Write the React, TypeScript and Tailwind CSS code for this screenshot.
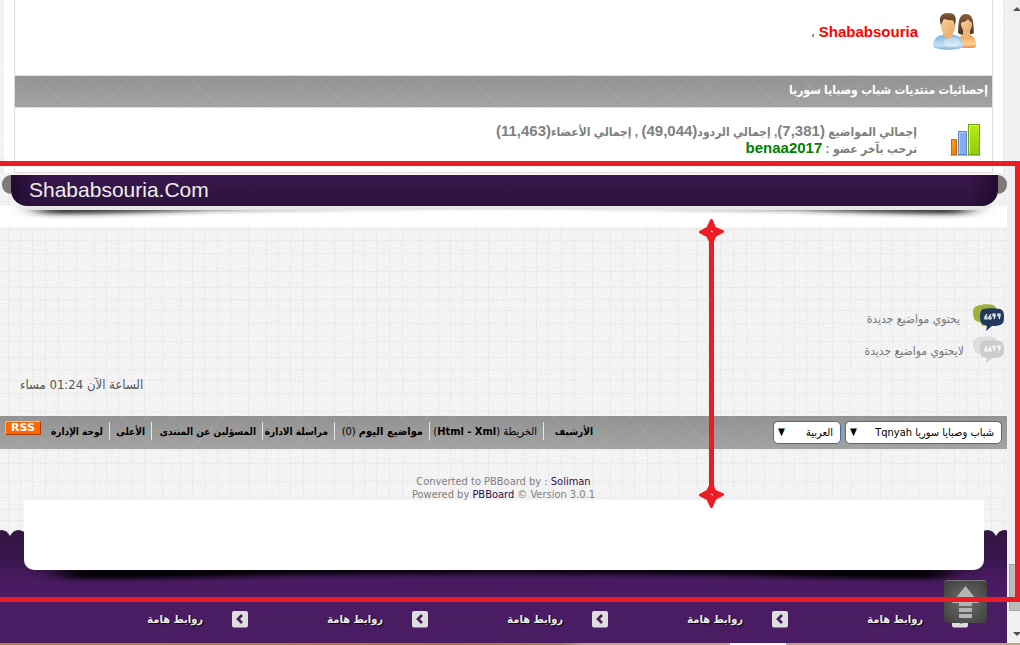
import React from 'react';

interface FooterLink {
  label: React.ReactNode;
  width: string;
}

const footerLinks: FooterLink[] = [
  { label: <b className="text-[10px]">الأرشيف</b>, width: 'w-[56px]' },
  { label: <>الخريطة (<b>Html - Xml</b>)</>, width: 'w-[114px]' },
  { label: <><b>مواضيع اليوم</b> (0)</>, width: 'w-[95px]' },
  { label: <b className="text-[10px]">مراسلة الادارة</b>, width: 'w-[72px]' },
  { label: <b className="text-[10px]">المسؤلين عن المنتدى</b>, width: 'w-[111px]' },
  { label: <b className="text-[10px]">الأعلى</b>, width: 'w-[42px]' },
  { label: <b className="text-[10px]">لوحة الإدارة</b>, width: 'w-[65px]' },
];

const hatch =
  'bg-[repeating-linear-gradient(45deg,#ffffff0d_0_1px,transparent_1px_18px),repeating-linear-gradient(-45deg,#ffffff0d_0_1px,transparent_1px_18px),linear-gradient(#929292,#a3a3a3)]';

const PaperTexture: React.FC = () => (
  <svg className="absolute inset-0 w-full h-full" aria-hidden="true">
    <defs>
      <filter id="grain" x="0" y="0" width="100%" height="100%">
        <feTurbulence type="fractalNoise" baseFrequency="0.6" numOctaves="2" seed="4" />
        <feColorMatrix values="0 0 0 0 0.84  0 0 0 0 0.84  0 0 0 0 0.84  2 0 0 0 -0.75" />
      </filter>
      <pattern id="weave" width="86" height="70" patternUnits="userSpaceOnUse">
        <path
          d="M8.5 0V70M20.5 0V70M32.5 0V70M45.5 0V70M58.5 0V70M76.5 0V70M0 7.5H86M0 19.5H86M0 30.5H86M0 43.5H86M0 61.5H86"
          stroke="#dedede"
          strokeWidth="1"
          opacity="0.4"
        />
      </pattern>
    </defs>
    <rect width="100%" height="100%" fill="#f6f6f6" />
    <rect width="100%" height="100%" filter="url(#grain)" />
    <rect width="100%" height="100%" fill="url(#weave)" />
  </svg>
);

const PeopleIcon: React.FC = () => (
  <svg width="44" height="38" viewBox="0 0 44 38" aria-hidden="true">
    <defs>
      <linearGradient id="blueShirt" x1="0" y1="0" x2="0" y2="1">
        <stop offset="0" stopColor="#7fb2dc" />
        <stop offset=".7" stopColor="#c5e2f6" />
        <stop offset="1" stopColor="#86b0d4" />
      </linearGradient>
      <linearGradient id="orangeShirt" x1="0" y1="0" x2="0" y2="1">
        <stop offset="0" stopColor="#f2a04c" />
        <stop offset=".7" stopColor="#ffd093" />
        <stop offset="1" stopColor="#ee8d35" />
      </linearGradient>
      <linearGradient id="skin" x1="0" y1="0" x2="1" y2="1">
        <stop offset="0" stopColor="#fbd4a1" />
        <stop offset="1" stopColor="#e6a668" />
      </linearGradient>
      <linearGradient id="hair" x1="0" y1="0" x2="0" y2="1">
        <stop offset="0" stopColor="#86603c" />
        <stop offset="1" stopColor="#4b2f1b" />
      </linearGradient>
    </defs>
    <path d="M26 35V25c1-2 3-3 5-3l6 0c4 1 6 5 6 11 0 1-1 2-3 2z" fill="url(#orangeShirt)" />
    <path d="M25 20C26 14 24 1 33 1c9 0 7 13 8 19-3 2-13 3-16 0z" fill="url(#hair)" />
    <path d="M30 17h7v5c-1 3-5 4-7 0z" fill="#eeb47a" />
    <path d="M28 10c2-1 6-2 7-4 1 2 3 3 4 4 0 6-2 9-5 9s-6-4-6-9z" fill="url(#skin)" />
    <path d="M0 33c0-6 3-10 9-11l12 0c7 1 9 5 9 11 0 5-29 5-30 0z" fill="url(#blueShirt)" />
    <ellipse cx="19" cy="29" rx="8" ry="5" fill="#fff" opacity=".35" />
    <path d="M10 19h10v3c-2 5-8 5-10 0z" fill="#eab077" />
    <path d="M8 9c0-6 14-6 14 0 1 8-2 13-7 13S7 17 8 9z" fill="url(#skin)" />
    <path d="M8 12C5 3 9 0 15 0c7 0 9 3 7 12l-2-5c-3 1-7-1-9-1-1 1-2 4-3 6z" fill="url(#hair)" />
  </svg>
);

const StatsIcon: React.FC = () => (
  <svg width="31" height="33" viewBox="0 0 31 33" aria-hidden="true">
    <defs>
      <linearGradient id="barOrange" x1="0" y1="0" x2="1" y2="1">
        <stop offset="0" stopColor="#ffa827" />
        <stop offset="1" stopColor="#ee7200" />
      </linearGradient>
      <linearGradient id="barGreen" x1="0" y1="0" x2="0" y2="1">
        <stop offset="0" stopColor="#b9ec18" />
        <stop offset="1" stopColor="#8fcb0c" />
      </linearGradient>
    </defs>
    <path d="M0 32.5H31" stroke="#b9b3b3" />
    <rect x="1.5" y="16.5" width="5" height="15" fill="url(#barOrange)" stroke="#c86a10" />
    <rect x="8.5" y="8.5" width="8" height="23" fill="#86aeee" stroke="#5c86cd" />
    <path d="M9.5 31V9.5h6" fill="none" stroke="#b4cff8" />
    <rect x="18.5" y="1.5" width="11" height="30" fill="url(#barGreen)" stroke="#72a60c" />
    <path d="M19.5 31V2.5h9" fill="none" stroke="#d5f56b" />
  </svg>
);

interface BubblesProps {
  back: string;
  front: string;
}

const Bubbles: React.FC<BubblesProps> = ({ back, front }) => (
  <svg width="32" height="27" viewBox="0 0 32 27" className="-mt-1" aria-hidden="true">
    <path d="M5 2C10 0 17 0 21 1c3 1 4 4 4 8l-2 8-11 2-1 4-3-5C3 18 1 14 1 9c0-4 1-6 4-7z" fill={back} />
    <path d="M11 5c5-1 12-1 17 0 3 1 4 3 4 8s-1 7-4 8c-2 1-6 1-8 1l-6 5 1-5c-5-1-7-4-7-9 0-5 1-7 3-8z" fill={front} />
    <path
      d="M15 10l-2 3h2v2h-2v-2M19 10l-2 3h2v2h-2v-2M21 10h2v2h-2zM23 10v2l-1 3M26 10h2v2h-2zM28 10v2l-1 3"
      fill="none"
      stroke="#fff"
      strokeWidth="1.2"
    />
  </svg>
);

const BannerShadow: React.FC = () => (
  <svg className="block w-full h-[21px]" viewBox="0 0 1007 21" preserveAspectRatio="none" aria-hidden="true">
    <defs>
      <filter id="soft" filterUnits="userSpaceOnUse" x="-20" y="-10" width="1047" height="50">
        <feGaussianBlur stdDeviation="12 2.5" />
      </filter>
    </defs>
    <rect width="1007" height="21" fill="#fff" />
    <path d="M35 1H972L965 8Q900 8 800 4 504 -2 207 4 107 8 42 8z" fill="#222" filter="url(#soft)" />
    <path d="M13 0H994Q984 4 968 4H39Q23 4 13 0z" fill="#e6e6e6" />
  </svg>
);

const StarMark: React.FC = () => (
  <svg width="25" height="26" viewBox="0 0 25 26" aria-hidden="true">
    <path
      d="M12.5 1.500L15.500 9 23.500 12.500 16 16.500 12.500 24.500 9 17 1.500 13 9 9z"
      fill="#ed1c24"
      stroke="#ed1c24"
      strokeWidth="3"
      strokeLinejoin="round"
    />
    <path d="M12 12l2 1" stroke="#fff" />
  </svg>
);

const App: React.FC = () => {
  return (
    <div className="relative flex overflow-hidden bg-[#f0f0f0] font-['DejaVu_Sans_Condensed','DejaVu_Sans',sans-serif] text-[11px]">
      <main dir="rtl" className="relative flex-1 min-w-0 bg-[#f4f4f4]">
        <PaperTexture />
        <div className="relative">
          <section className="mx-1 bg-white px-[10px]">
            <div className="border-x border-b border-[#e8dada] font-['Liberation_Sans','DejaVu_Sans_Condensed',sans-serif] font-bold">
              <div className="flex h-[75px] pt-[13px] pr-[15px] gap-[15px]">
                <PeopleIcon />
                <p className="pt-[9px] text-[15px] leading-5 text-[#f00]">
                  <a href="#member">Shababsouria</a> <span className="text-[10px] text-gray-500">،</span>
                </p>
              </div>
              <h2 className={`flex items-center h-[33px] border-y border-[#e8dada] px-1 pb-[3px] text-[12px] text-white ${hatch}`}>
                إحصائيات منتديات شباب وصبايا سوريا
              </h2>
              <div className="flex h-16 pt-[15px] pr-[11px] gap-[33px]">
                <StatsIcon />
                <div className="text-[12px] leading-4 text-[#808080]">
                  <p>
                    إجمالي المواضيع <span className="text-[15px] leading-none">(7,381)</span>, إجمالي الردود
                    <span className="text-[15px] leading-none">(49,044)</span> , إجمالي الأعضاء
                    <span className="text-[15px] leading-none">(11,463)</span>
                  </p>
                  <p>
                    نرحب بآخر عضو : <a href="#benaa" className="text-[15px] leading-none text-[#008000]">benaa2017</a>
                  </p>
                </div>
              </div>
            </div>
          </section>

          <header dir="ltr" className="pt-[2px]">
            <div className="flex">
              <span className="w-[9px] h-[19px] ml-[2px] rounded-l-full bg-[#807a77]" />
              <h1 className="flex-1 h-[31px] pl-[18px] rounded-b-[16px] bg-[linear-gradient(90deg,#210c2f,transparent_3%,transparent_97%,#210c2f),linear-gradient(#3a184f,#2c123b)] font-['Liberation_Sans',sans-serif] text-[21px] leading-[29px] text-[#eee]">
                Shababsouria.Com
              </h1>
              <span className="w-[9px] h-[19px] rounded-r-full bg-[#807a77]" />
            </div>
            <BannerShadow />
          </header>

          <section className="h-[189px] pt-[76px] text-[12px] text-[#777]">
            <ul>
              <li className="flex items-center gap-3 h-8 pr-[3px]">
                <Bubbles back="#9bb13b" front="#203a5e" />
                يحتوي مواضيع جديدة
              </li>
              <li className="flex items-center gap-2 h-8 pr-[3px]">
                <Bubbles back="#dedede" front="#cccccc" />
                لايحتوي مواضيع جديدة
              </li>
            </ul>
            <p className="mt-[9px] pl-5 text-left leading-[18px] text-[13px] text-[#555]">الساعة الآن 01:24 مساء</p>
          </section>

          <nav className={`flex justify-between h-[33px] px-[5px] text-black ${hatch}`}>
            <div className="flex gap-1 pt-[5px]">
              <div className="relative w-[157px]">
                <select aria-label="الستايل" className="appearance-none w-full h-[23px] pr-[7px] pt-[2px] rounded-[5px] border border-[#3e6cb0] bg-white">
                  <option>شباب وصبايا سوريا Tqnyah</option>
                </select>
                <span className="absolute left-[5px] top-[3px] pointer-events-none text-[10px]">▼</span>
              </div>
              <div className="relative w-[68px]">
                <select aria-label="اللغة" className="appearance-none w-full h-[23px] pr-[7px] pt-[2px] rounded-[5px] border border-[#3e6cb0] bg-white">
                  <option>العربية</option>
                </select>
                <span className="absolute left-[5px] top-[3px] pointer-events-none text-[10px]">▼</span>
              </div>
            </div>
            <div className="flex pt-[6px]">
              <ul className="flex divide-x divide-[#e5e5e5]">
                {footerLinks.map((link, i) => (
                  <li key={i} className={`h-[18px] pr-[6px] leading-[19px] whitespace-nowrap ${link.width}`}>
                    <a href="#footer">{link.label}</a>
                  </li>
                ))}
              </ul>
              <a
                href="#rss"
                className="w-9 h-[14px] mr-[3px] -mt-px border border-t-[#ffb27a] border-l-[#ffb27a] border-r-[#a33e00] border-b-[#a33e00] bg-[#ff6600] text-center font-['DejaVu_Sans',sans-serif] font-bold text-[11px] leading-3 text-white"
              >
                RSS
              </a>
            </div>
          </nav>

          <div dir="ltr" className="h-[51px] pt-[26px] text-center leading-[13px] text-[#808080]">
            <p>Converted to PBBoard by : <a href="#soliman" className="text-[#2c0f4a]">Soliman</a></p>
            <p>Powered by <a href="#pbboard" className="text-[#2c0f4a]">PBBoard</a> © Version 3.0.1</p>
          </div>

          <footer className="relative">
            <svg className="absolute top-[30px] w-full h-[115px]" aria-hidden="true">
              <defs>
                <linearGradient id="purple" x1="0" y1="0" x2="0" y2="1">
                  <stop offset="0" stopColor="#351546" />
                  <stop offset=".2" stopColor="#38174c" />
                  <stop offset=".42" stopColor="#4a1b63" />
                  <stop offset="1" stopColor="#4b1d64" />
                </linearGradient>
                <pattern id="scallop" x="-7" width="17" height="7" patternUnits="userSpaceOnUse">
                  <path d="M0 7V6C2 2 5 0 8.5 0S15 2 17 6V7z" fill="#351546" />
                </pattern>
                <pattern id="dots" width="4" height="4" patternUnits="userSpaceOnUse">
                  <rect width="1" height="1" fill="#3d1556" />
                </pattern>
              </defs>
              <rect width="100%" height="7" fill="url(#scallop)" />
              <rect y="6" width="100%" height="109" fill="url(#purple)" />
              <rect y="40" width="100%" height="75" fill="url(#dots)" opacity=".5" />
            </svg>
            <div className="relative mr-[23px] ml-6 h-[70px] rounded-b-[10px] bg-white" />
            <svg className="relative block w-full h-[20px]" viewBox="0 0 1007 20" preserveAspectRatio="none" aria-hidden="true">
              <defs>
                <filter id="drop" filterUnits="userSpaceOnUse" x="-20" y="-20" width="1047" height="60">
                  <feGaussianBlur stdDeviation="16 2.5" />
                </filter>
              </defs>
              <path d="M55 -2H953L943 9Q850 9 730 5 504 2 280 5 160 9 65 9z" fill="#000" filter="url(#drop)" />
            </svg>
            <ul className="relative flex h-[55px] pt-[19px] pr-[39px] text-white">
              {[1, 2, 3, 4, 5].map((n) => (
                <li key={n} className="flex w-[180px] gap-[29px]">
                  <svg width="16" height="17" viewBox="0 0 16 17" className="mt-[2px]" aria-hidden="true">
                    <rect width="16" height="16.5" rx="2" fill="#dedede" />
                    <path d="M10 4L6 8l4 4" fill="none" stroke="#451b5e" strokeWidth="2.6" />
                  </svg>
                  <h3 className="font-bold text-[11px] leading-[21px] text-[#eee] [text-shadow:1px_1px_1px_#000]">روابط هامة</h3>
                </li>
              ))}
            </ul>
          </footer>
        </div>
      </main>

      {/* scrollbar */}
      <aside className="flex flex-col w-[13px] pl-[2px]">
        <svg className="mt-[7px] ml-1" width="8" height="4" aria-hidden="true"><path d="M0 4l4-4 4 4z" fill="#505050" /></svg>
        <span className="flex-1" />
        <span className="h-[47px] border border-r-0 border-[#a8a8a8] bg-[#bcbcbc]" />
        <svg className="mt-[21px] mb-[9px] ml-1" width="8" height="4" aria-hidden="true"><path d="M0 0h8l-4 4z" fill="#505050" /></svg>
      </aside>

      <div className="absolute inset-x-0 bottom-0 h-[2px] bg-[linear-gradient(90deg,#b5813a,#b5732c_45%,#a77f45_55%,#c4a57a_57%)]">
        <span className="absolute right-[234px] w-14 h-[2px] bg-white" />
      </div>

      <button aria-label="أعلى الصفحة" className="absolute right-[33px] bottom-[22px] w-[43px] h-[43px] rounded-[4px] border-t border-[#777] bg-[radial-gradient(#707070,#3c3c3c)]">
        <svg width="43" height="42" viewBox="0 0 43 42" aria-hidden="true">
          <path d="M21.5 5L35 22H28V25H15V22H8zM15 27H28V31H15zM15 33H28V37H15z" fill="#b4b4b4" />
        </svg>
      </button>

      {/* marked area */}
      <div className="absolute -left-[5px] right-0 top-[161px] bottom-[43px] border-[5px] border-[#ed1c24] pointer-events-none" />
      <div className="absolute right-[296px] top-[219px] flex flex-col items-center pointer-events-none">
        <StarMark />
        <span className="w-[5px] h-[257px] -my-[10px] bg-[#ed1c24]" />
        <StarMark />
      </div>
    </div>
  );
};

export default App;
